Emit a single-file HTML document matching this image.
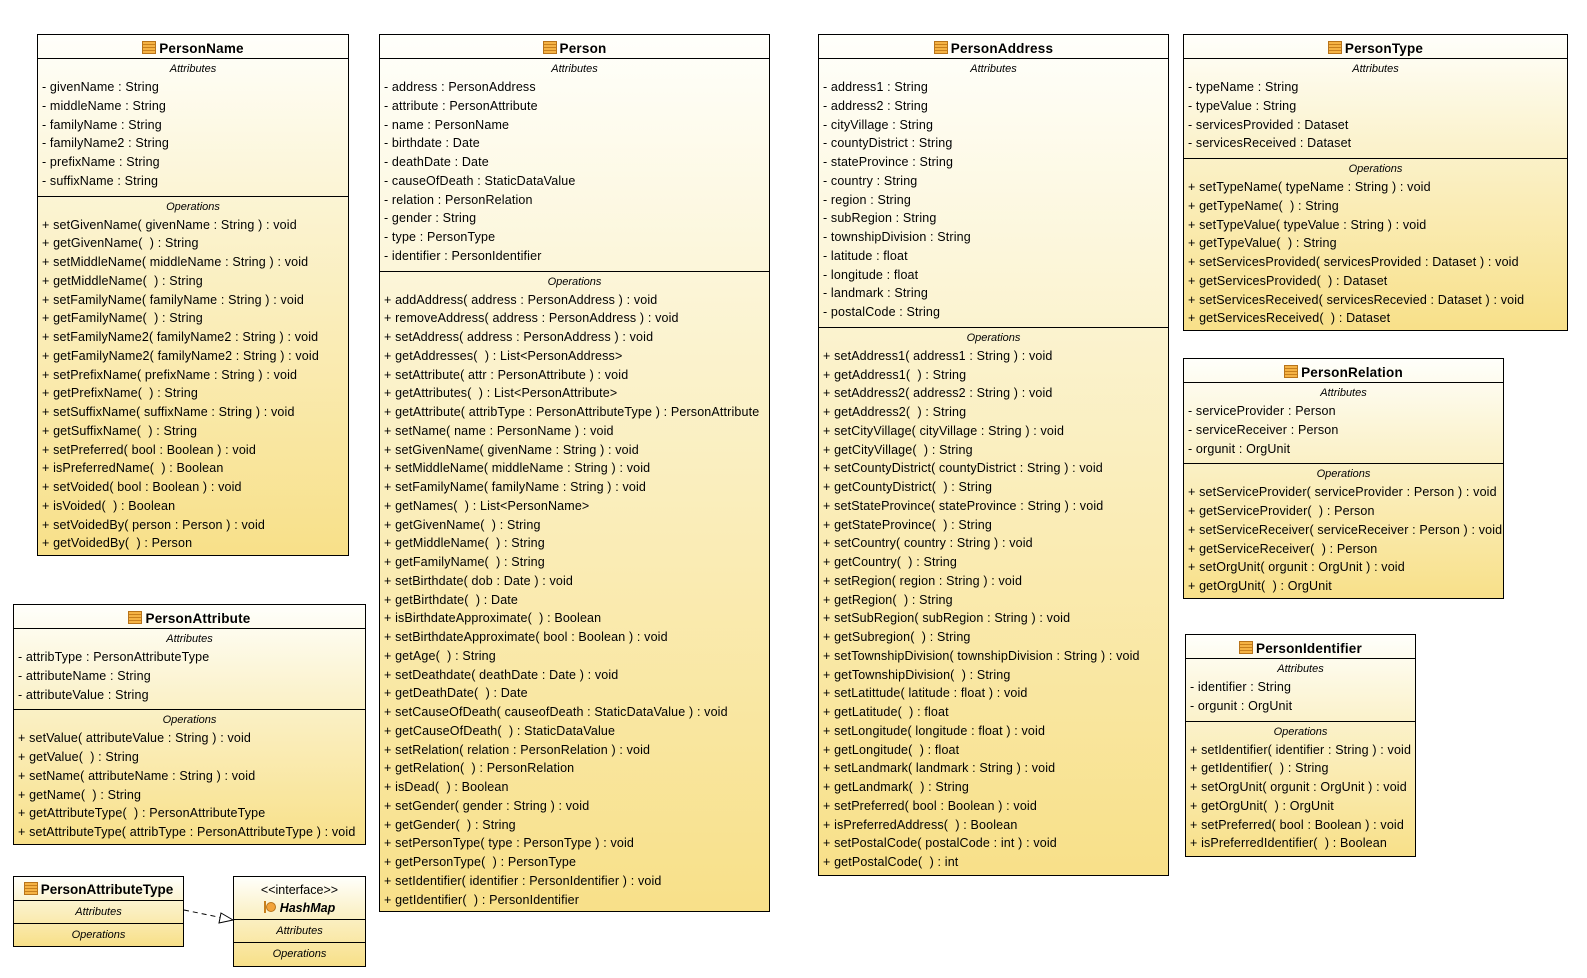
<!DOCTYPE html>
<html><head><meta charset="utf-8"><style>
body{margin:0;width:1587px;height:978px;background:#fff;position:relative;overflow:hidden;font-family:"Liberation Sans",sans-serif;color:#000}
.b{position:absolute;border:1px solid #000;background:linear-gradient(#fffffb,#fbf3cf 35%,#f8e089);box-sizing:border-box;overflow:hidden}
.t{height:23px;border-bottom:1px solid #000;font-weight:bold;font-size:13.5px;line-height:27px;text-align:center;white-space:nowrap;overflow:hidden;letter-spacing:0.2px}
.ic{display:inline-block;width:12px;height:11px;border:1px solid #b8741a;background:repeating-linear-gradient(#f5b345 0 2px,#c77f1c 2px 3px);vertical-align:-1px;margin-right:3px}
.s{padding-bottom:5px}
.s+.s{border-top:1px solid #000}
.l{font-style:italic;font-size:11px;line-height:18px;padding-top:1px;text-align:center}
.r{font-size:12.5px;letter-spacing:0.15px;line-height:18.75px;padding-left:4px;white-space:nowrap}
.m .s{padding:0;height:22px}
.m .l{line-height:22px;font-size:11px;padding:0}
</style></head><body>

<div class="b" style="left:37px;top:34px;width:312px;height:522px">
<div class="t"><span class="ic"></span>PersonName</div>
<div class="s"><div class="l">Attributes</div>
<div class="r">- givenName : String</div><div class="r">- middleName : String</div><div class="r">- familyName : String</div><div class="r">- familyName2 : String</div><div class="r">- prefixName : String</div><div class="r">- suffixName : String</div></div>
<div class="s"><div class="l">Operations</div>
<div class="r">+ setGivenName( givenName : String ) : void</div><div class="r">+ getGivenName(&nbsp; ) : String</div><div class="r">+ setMiddleName( middleName : String ) : void</div><div class="r">+ getMiddleName(&nbsp; ) : String</div><div class="r">+ setFamilyName( familyName : String ) : void</div><div class="r">+ getFamilyName(&nbsp; ) : String</div><div class="r">+ setFamilyName2( familyName2 : String ) : void</div><div class="r">+ getFamilyName2( familyName2 : String ) : void</div><div class="r">+ setPrefixName( prefixName : String ) : void</div><div class="r">+ getPrefixName(&nbsp; ) : String</div><div class="r">+ setSuffixName( suffixName : String ) : void</div><div class="r">+ getSuffixName(&nbsp; ) : String</div><div class="r">+ setPreferred( bool : Boolean ) : void</div><div class="r">+ isPreferredName(&nbsp; ) : Boolean</div><div class="r">+ setVoided( bool : Boolean ) : void</div><div class="r">+ isVoided(&nbsp; ) : Boolean</div><div class="r">+ setVoidedBy( person : Person ) : void</div><div class="r">+ getVoidedBy(&nbsp; ) : Person</div></div>
</div>

<div class="b" style="left:379px;top:34px;width:391px;height:878px">
<div class="t"><span class="ic"></span>Person</div>
<div class="s"><div class="l">Attributes</div>
<div class="r">- address : PersonAddress</div><div class="r">- attribute : PersonAttribute</div><div class="r">- name : PersonName</div><div class="r">- birthdate : Date</div><div class="r">- deathDate : Date</div><div class="r">- causeOfDeath : StaticDataValue</div><div class="r">- relation : PersonRelation</div><div class="r">- gender : String</div><div class="r">- type : PersonType</div><div class="r">- identifier : PersonIdentifier</div></div>
<div class="s"><div class="l">Operations</div>
<div class="r">+ addAddress( address : PersonAddress ) : void</div><div class="r">+ removeAddress( address : PersonAddress ) : void</div><div class="r">+ setAddress( address : PersonAddress ) : void</div><div class="r">+ getAddresses(&nbsp; ) : List&lt;PersonAddress&gt;</div><div class="r">+ setAttribute( attr : PersonAttribute ) : void</div><div class="r">+ getAttributes(&nbsp; ) : List&lt;PersonAttribute&gt;</div><div class="r">+ getAttribute( attribType : PersonAttributeType ) : PersonAttribute</div><div class="r">+ setName( name : PersonName ) : void</div><div class="r">+ setGivenName( givenName : String ) : void</div><div class="r">+ setMiddleName( middleName : String ) : void</div><div class="r">+ setFamilyName( familyName : String ) : void</div><div class="r">+ getNames(&nbsp; ) : List&lt;PersonName&gt;</div><div class="r">+ getGivenName(&nbsp; ) : String</div><div class="r">+ getMiddleName(&nbsp; ) : String</div><div class="r">+ getFamilyName(&nbsp; ) : String</div><div class="r">+ setBirthdate( dob : Date ) : void</div><div class="r">+ getBirthdate(&nbsp; ) : Date</div><div class="r">+ isBirthdateApproximate(&nbsp; ) : Boolean</div><div class="r">+ setBirthdateApproximate( bool : Boolean ) : void</div><div class="r">+ getAge(&nbsp; ) : String</div><div class="r">+ setDeathdate( deathDate : Date ) : void</div><div class="r">+ getDeathDate(&nbsp; ) : Date</div><div class="r">+ setCauseOfDeath( causeofDeath : StaticDataValue ) : void</div><div class="r">+ getCauseOfDeath(&nbsp; ) : StaticDataValue</div><div class="r">+ setRelation( relation : PersonRelation ) : void</div><div class="r">+ getRelation(&nbsp; ) : PersonRelation</div><div class="r">+ isDead(&nbsp; ) : Boolean</div><div class="r">+ setGender( gender : String ) : void</div><div class="r">+ getGender(&nbsp; ) : String</div><div class="r">+ setPersonType( type : PersonType ) : void</div><div class="r">+ getPersonType(&nbsp; ) : PersonType</div><div class="r">+ setIdentifier( identifier : PersonIdentifier ) : void</div><div class="r">+ getIdentifier(&nbsp; ) : PersonIdentifier</div></div>
</div>

<div class="b" style="left:818px;top:34px;width:351px;height:842px">
<div class="t"><span class="ic"></span>PersonAddress</div>
<div class="s"><div class="l">Attributes</div>
<div class="r">- address1 : String</div><div class="r">- address2 : String</div><div class="r">- cityVillage : String</div><div class="r">- countyDistrict : String</div><div class="r">- stateProvince : String</div><div class="r">- country : String</div><div class="r">- region : String</div><div class="r">- subRegion : String</div><div class="r">- townshipDivision : String</div><div class="r">- latitude : float</div><div class="r">- longitude : float</div><div class="r">- landmark : String</div><div class="r">- postalCode : String</div></div>
<div class="s"><div class="l">Operations</div>
<div class="r">+ setAddress1( address1 : String ) : void</div><div class="r">+ getAddress1(&nbsp; ) : String</div><div class="r">+ setAddress2( address2 : String ) : void</div><div class="r">+ getAddress2(&nbsp; ) : String</div><div class="r">+ setCityVillage( cityVillage : String ) : void</div><div class="r">+ getCityVillage(&nbsp; ) : String</div><div class="r">+ setCountyDistrict( countyDistrict : String ) : void</div><div class="r">+ getCountyDistrict(&nbsp; ) : String</div><div class="r">+ setStateProvince( stateProvince : String ) : void</div><div class="r">+ getStateProvince(&nbsp; ) : String</div><div class="r">+ setCountry( country : String ) : void</div><div class="r">+ getCountry(&nbsp; ) : String</div><div class="r">+ setRegion( region : String ) : void</div><div class="r">+ getRegion(&nbsp; ) : String</div><div class="r">+ setSubRegion( subRegion : String ) : void</div><div class="r">+ getSubregion(&nbsp; ) : String</div><div class="r">+ setTownshipDivision( townshipDivision : String ) : void</div><div class="r">+ getTownshipDivision(&nbsp; ) : String</div><div class="r">+ setLatittude( latitude : float ) : void</div><div class="r">+ getLatitude(&nbsp; ) : float</div><div class="r">+ setLongitude( longitude : float ) : void</div><div class="r">+ getLongitude(&nbsp; ) : float</div><div class="r">+ setLandmark( landmark : String ) : void</div><div class="r">+ getLandmark(&nbsp; ) : String</div><div class="r">+ setPreferred( bool : Boolean ) : void</div><div class="r">+ isPreferredAddress(&nbsp; ) : Boolean</div><div class="r">+ setPostalCode( postalCode : int ) : void</div><div class="r">+ getPostalCode(&nbsp; ) : int</div></div>
</div>

<div class="b" style="left:1183px;top:34px;width:385px;height:297px">
<div class="t"><span class="ic"></span>PersonType</div>
<div class="s"><div class="l">Attributes</div>
<div class="r">- typeName : String</div><div class="r">- typeValue : String</div><div class="r">- servicesProvided : Dataset</div><div class="r">- servicesReceived : Dataset</div></div>
<div class="s"><div class="l">Operations</div>
<div class="r">+ setTypeName( typeName : String ) : void</div><div class="r">+ getTypeName(&nbsp; ) : String</div><div class="r">+ setTypeValue( typeValue : String ) : void</div><div class="r">+ getTypeValue(&nbsp; ) : String</div><div class="r">+ setServicesProvided( servicesProvided : Dataset ) : void</div><div class="r">+ getServicesProvided(&nbsp; ) : Dataset</div><div class="r">+ setServicesReceived( servicesRecevied : Dataset ) : void</div><div class="r">+ getServicesReceived(&nbsp; ) : Dataset</div></div>
</div>

<div class="b" style="left:1183px;top:358px;width:321px;height:241px">
<div class="t"><span class="ic"></span>PersonRelation</div>
<div class="s"><div class="l">Attributes</div>
<div class="r">- serviceProvider : Person</div><div class="r">- serviceReceiver : Person</div><div class="r">- orgunit : OrgUnit</div></div>
<div class="s"><div class="l">Operations</div>
<div class="r">+ setServiceProvider( serviceProvider : Person ) : void</div><div class="r">+ getServiceProvider(&nbsp; ) : Person</div><div class="r">+ setServiceReceiver( serviceReceiver : Person ) : void</div><div class="r">+ getServiceReceiver(&nbsp; ) : Person</div><div class="r">+ setOrgUnit( orgunit : OrgUnit ) : void</div><div class="r">+ getOrgUnit(&nbsp; ) : OrgUnit</div></div>
</div>

<div class="b" style="left:1185px;top:634px;width:231px;height:223px">
<div class="t"><span class="ic"></span>PersonIdentifier</div>
<div class="s"><div class="l">Attributes</div>
<div class="r">- identifier : String</div><div class="r">- orgunit : OrgUnit</div></div>
<div class="s"><div class="l">Operations</div>
<div class="r">+ setIdentifier( identifier : String ) : void</div><div class="r">+ getIdentifier(&nbsp; ) : String</div><div class="r">+ setOrgUnit( orgunit : OrgUnit ) : void</div><div class="r">+ getOrgUnit(&nbsp; ) : OrgUnit</div><div class="r">+ setPreferred( bool : Boolean ) : void</div><div class="r">+ isPreferredIdentifier(&nbsp; ) : Boolean</div></div>
</div>

<div class="b" style="left:13px;top:604px;width:353px;height:241px">
<div class="t"><span class="ic"></span>PersonAttribute</div>
<div class="s"><div class="l">Attributes</div>
<div class="r">- attribType : PersonAttributeType</div><div class="r">- attributeName : String</div><div class="r">- attributeValue : String</div></div>
<div class="s"><div class="l">Operations</div>
<div class="r">+ setValue( attributeValue : String ) : void</div><div class="r">+ getValue(&nbsp; ) : String</div><div class="r">+ setName( attributeName : String ) : void</div><div class="r">+ getName(&nbsp; ) : String</div><div class="r">+ getAttributeType(&nbsp; ) : PersonAttributeType</div><div class="r">+ setAttributeType( attribType : PersonAttributeType ) : void</div></div>
</div>

<div class="b m" style="left:13px;top:876px;width:171px;height:71px">
<div class="t" style="font-size:13.5px;line-height:26px;letter-spacing:0"><span class="ic"></span>PersonAttributeType</div>
<div class="s"><div class="l">Attributes</div></div>
<div class="s"><div class="l">Operations</div></div>
</div>

<div class="b m" style="left:233px;top:876px;width:133px;height:91px">
<div style="height:43px;border-bottom:1px solid #000;text-align:center;font-size:12.5px;line-height:18px;padding-top:4px;box-sizing:border-box">&lt;&lt;interface&gt;&gt;<br><span style="display:inline-block;width:2px;height:12px;background:#c77f1c;vertical-align:-1px"></span><span style="display:inline-block;width:8px;height:8px;border-radius:50%;background:#f2a33a;border:1px solid #b8741a;vertical-align:0;margin-right:4px"></span><b><i>HashMap</i></b></div>
<div class="s"><div class="l">Attributes</div></div>
<div class="s"><div class="l">Operations</div></div>
</div>

<svg style="position:absolute;left:183px;top:905px" width="52" height="20"><path d="M1 5 L40 13" stroke="#000" stroke-dasharray="5,4" fill="none"/><path d="M38 8 L50 15 L36 18 Z" fill="#fff" stroke="#000"/></svg>

</body></html>
